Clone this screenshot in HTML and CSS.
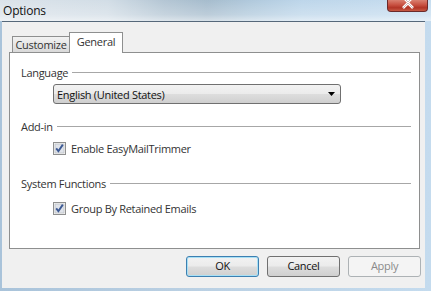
FILE: index.html
```html
<!DOCTYPE html>
<html>
	<head>
		<title>Options</title>
		<meta charset="utf-8">
		<link rel="stylesheet" href="styles.css">
	</head>

	<body>
		<div class="window">
			<div class="titlebar">
				<span class="title">Options</span>
				<div class="close">
					<svg width="14" height="9" viewBox="0 0 14 9">
						<path d="M2 -3 L7 2 L12 -3 M2 8 L7 3 L12 8" stroke="#fff" stroke-width="2.6" fill="none"/>
						<path d="M2 -3 L7 2 L12 -3 M2 8 L7 3 L12 8" stroke="#5b1d1d" stroke-width="0.6" fill="none" opacity=".5"/>
					</svg>
				</div>
			</div>

			<div class="client">
				<div class="tabs">
					<div class="tab">Customize</div>
					<div class="tab active">General</div>
				</div>

				<div class="panel">
					<div class="group-head"><span>Language</span><i></i></div>
					<div class="select">
						<span>English (United States)</span>
						<svg width="7" height="4" viewBox="0 0 7 4"><path d="M0 0 H7 L3.5 4 Z" fill="#000"/></svg>
					</div>

					<div class="group-head addin"><span>Add-in</span><i></i></div>
					<div class="check first">
						<svg class="box" width="13" height="13" viewBox="0 0 13 13">
							<rect x="0.5" y="0.5" width="12" height="12" fill="#f4f4f4" stroke="#8e8f8f"/>
							<rect x="2" y="2" width="9" height="9" fill="#dfe3ea" stroke="#b5b8bd" stroke-width="0.6"/>
							<path d="M3.2 6.4 L5.4 9.2 L9.8 2.6" stroke="#3d5a94" stroke-width="1.9" fill="none"/>
						</svg>
						<span>Enable EasyMailTrimmer</span>
					</div>

					<div class="group-head sys"><span>System Functions</span><i></i></div>
					<div class="check second">
						<svg class="box" width="13" height="13" viewBox="0 0 13 13">
							<rect x="0.5" y="0.5" width="12" height="12" fill="#f4f4f4" stroke="#8e8f8f"/>
							<rect x="2" y="2" width="9" height="9" fill="#dfe3ea" stroke="#b5b8bd" stroke-width="0.6"/>
							<path d="M3.2 6.4 L5.4 9.2 L9.8 2.6" stroke="#3d5a94" stroke-width="1.9" fill="none"/>
						</svg>
						<span>Group By Retained Emails</span>
					</div>
				</div>

				<div class="buttons">
					<div class="btn default">OK</div>
					<div class="btn">Cancel</div>
					<div class="btn disabled">Apply</div>
				</div>
			</div>
		</div>
	</body>
</html>
```

FILE: styles.css
```css
html,body {
	margin: 0;
	padding: 0;
}

body {
	width: 431px;
	height: 291px;
	overflow: hidden;
	font-family: "Open Sans", "Noto Sans", sans-serif;
	font-size: 11px;
	letter-spacing: -0.3px;
	color: #333;
}

.window {
	height: 291px;
	display: flex;
	flex-direction: column;
	background: linear-gradient(90deg, #a9c3da 0%, #b9cfe2 40%, #c4dbee 100%);
}

.titlebar {
	height: 21px;
	display: flex;
	background:
		linear-gradient(180deg, rgba(255,255,255,0) 0%, rgba(255,255,255,.25) 70%, rgba(255,255,255,.55) 100%),
		linear-gradient(90deg, #dbe3ea 0%, #d2dde6 25%, #b4c6d4 38%, #a6bccd 48%, #b0c9dc 58%, #bdd6ea 70%, #c6ddf0 100%);
}

.title {
	padding: 2px 0 0 3px;
	font-size: 12px;
	letter-spacing: -0.2px;
	color: #111;
}

.close {
	margin-left: auto;
	margin-right: 3px;
	width: 41px;
	height: 12px;
	box-sizing: border-box;
	border: 1px solid #6b2a2a;
	border-top: none;
	border-radius: 0 0 4px 4px;
	background: linear-gradient(180deg, #d98070 0%, #c85040 45%, #b23526 70%, #c75a45 100%);
	display: flex;
	justify-content: center;
}

.client {
	flex: 1;
	margin: 0 6px 3px 2px;
	background: #f0f0f0;
	border-top: 1px solid #56687a;
	padding: 10px 0 0 7px;
}

.tabs {
	height: 20px;
	display: flex;
	align-items: flex-end;
	padding-left: 3px;
}

.tab {
	box-sizing: border-box;
	height: 16px;
	width: 58px;
	border: 1px solid #8e8f8f;
	border-bottom: none;
	background: linear-gradient(180deg, #f2f2f2 0%, #e6e6e6 50%, #d9d9d9 100%);
	text-align: center;
	line-height: 15px;
}

.tab.active {
	position: relative;
	z-index: 1;
	height: 21px;
	width: 54px;
	margin-left: -1px;
	margin-bottom: -1px;
	background: #fff;
	line-height: 17px;
}

.panel {
	box-sizing: border-box;
	width: 411px;
	height: 197px;
	border: 1px solid #8e8f8f;
	background: #fff;
	padding: 11px 8px 0 11px;
}

.group-head {
	display: flex;
	align-items: center;
	height: 16px;
	gap: 4px;
}

.group-head i {
	flex: 1;
	height: 1px;
	background: #a7a7a7;
}

.group-head.addin {
	margin-top: 14px;
}

.group-head.sys {
	margin-top: 19px;
}

.select {
	box-sizing: border-box;
	margin: 4px 0 0 32px;
	width: 288px;
	height: 20px;
	border: 1px solid #707070;
	border-radius: 3px;
	background: linear-gradient(180deg, #f2f2f2 0%, #ebebeb 48%, #dddddd 52%, #cfcfcf 100%);
	display: flex;
	align-items: center;
	justify-content: space-between;
	padding: 0 5px 0 3px;
	color: #111;
}

.check {
	display: flex;
	align-items: center;
	gap: 5px;
	height: 16px;
	margin-left: 32px;
}

.check.first {
	margin-top: 6px;
}

.check.second {
	margin-top: 9px;
}

.buttons {
	width: 412px;
	margin-top: 7px;
	display: flex;
	justify-content: flex-end;
	gap: 8px;
}

.btn {
	box-sizing: border-box;
	width: 73px;
	height: 21px;
	border: 1px solid #707070;
	border-radius: 3px;
	background: linear-gradient(180deg, #f2f2f2 0%, #ebebeb 48%, #dddddd 52%, #cfcfcf 100%);
	text-align: center;
	line-height: 18px;
	color: #111;
}

.btn.default {
	border-color: #3c7fb1;
	box-shadow: inset 0 0 0 1px #a8e0f5;
}

.btn.disabled {
	border-color: #adb2b5;
	background: #f4f4f4;
	color: #8a8a8a;
}
```
